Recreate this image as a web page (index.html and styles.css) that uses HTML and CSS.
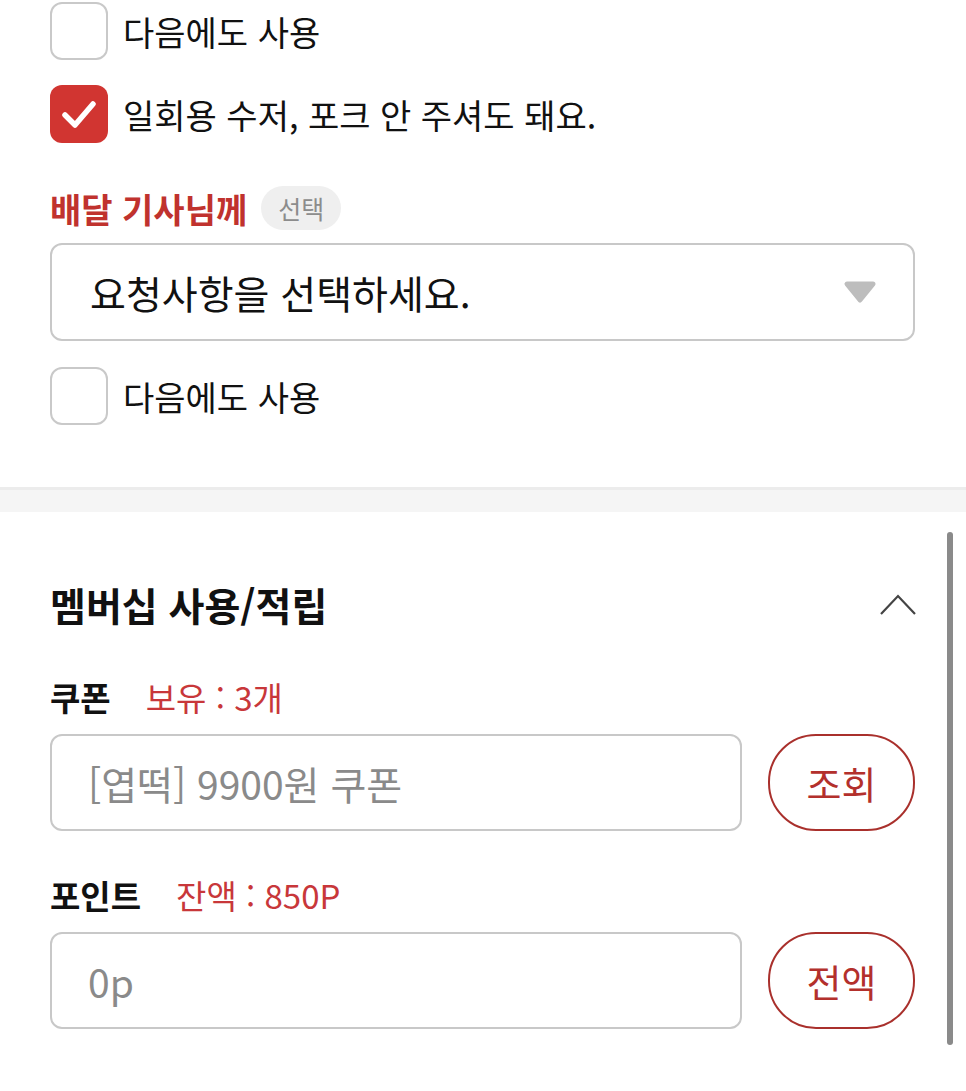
FILE: index.html
```html
<!DOCTYPE html>
<html lang="ko">
<head>
    <meta charset="UTF-8">
    <meta name="viewport" content="width=device-width, initial-scale=1.0">
    <title>주문하기</title>
    <link rel="stylesheet" href="styles.css">
</head>
<body>
    <div class="page">
        <section class="request">
            <label class="check">
                <span class="box"></span>
                <span class="check-text">다음에도 사용</span>
            </label>
            <label class="check">
                <span class="box checked">
                    <svg viewBox="0 0 58 58" width="58" height="58"><path d="M15 30 L25 40 L43 19" fill="none" stroke="#fff" stroke-width="5.5" stroke-linecap="round" stroke-linejoin="round"/></svg>
                </span>
                <span class="check-text">일회용 수저, 포크 안 주셔도 돼요.</span>
            </label>
            <div class="field-head">
                <h3 class="req-title">배달 기사님께</h3>
                <span class="badge">선택</span>
            </div>
            <div class="select">
                <span>요청사항을 선택하세요.</span>
                <svg viewBox="0 0 34 24" width="34" height="24"><path d="M4 4 L30 4 L17 20 Z" fill="#bdbdbd" stroke="#bdbdbd" stroke-width="5" stroke-linejoin="round"/></svg>
            </div>
            <label class="check">
                <span class="box"></span>
                <span class="check-text">다음에도 사용</span>
            </label>
        </section>

        <div class="divider"></div>

        <section class="membership">
            <div class="sec-head">
                <h2>멤버십 사용/적립</h2>
                <svg viewBox="0 0 38 24" width="38" height="24"><path d="M2 22 L19 4 L36 22" fill="none" stroke="#444" stroke-width="2.2"/></svg>
            </div>

            <div class="field">
                <div class="field-label"><strong>쿠폰</strong><span class="info">보유 : 3개</span></div>
                <div class="input-row">
                    <input type="text" placeholder="[엽떡] 9900원 쿠폰">
                    <button>조회</button>
                </div>
            </div>

            <div class="field">
                <div class="field-label"><strong>포인트</strong><span class="info">잔액 : 850P</span></div>
                <div class="input-row">
                    <input type="text" placeholder="0p">
                    <button>전액</button>
                </div>
            </div>
        </section>

        <div class="scrollbar"></div>
    </div>
</body>
</html>
```

FILE: styles.css
```css
body {
    margin: 0;
    font-family: "Noto Sans CJK KR", "Noto Sans", sans-serif;
    background: #fff;
    color: #111;
}
.page {
    position: relative;
    width: 966px;
    height: 1091px;
    overflow: hidden;
}
.request {
    padding: 2px 51px 0 50px;
}
.check {
    display: flex;
    align-items: center;
    gap: 15px;
    height: 58px;
    margin-bottom: 25px;
}
.box {
    box-sizing: border-box;
    width: 58px;
    height: 58px;
    border: 2px solid #c9c9c9;
    border-radius: 12px;
    background: #fff;
    flex-shrink: 0;
}
.box.checked {
    border: none;
    background: #d13531;
}
.box svg {
    display: block;
}
.check-text {
    font-size: 34px;
    color: #111;
}
.field-head {
    display: flex;
    align-items: center;
    gap: 14px;
    margin-top: 43px;
    height: 44px;
}
.req-title {
    margin: 0;
    font-size: 34px;
    font-weight: bold;
    color: #c0322e;
}
.badge {
    height: 44px;
    line-height: 44px;
    padding: 0 17px;
    border-radius: 22px;
    background: #efefef;
    color: #8c8c8c;
    font-size: 25px;
}
.select {
    box-sizing: border-box;
    display: flex;
    align-items: center;
    justify-content: space-between;
    height: 98px;
    margin: 13px 0 26px;
    padding: 0 36px 0 38px;
    border: 2px solid #c8c8c8;
    border-radius: 12px;
    font-size: 39px;
}
.select svg {
    display: block;
}
.request .check:last-child {
    margin-bottom: 0;
}
.divider {
    box-sizing: border-box;
    height: 25px;
    margin-top: 62px;
    border-top: 3px solid #ececec;
    background: #f5f5f5;
}
.membership {
    padding: 0 51px 0 50px;
}
.sec-head {
    display: flex;
    align-items: center;
    justify-content: space-between;
    margin-top: 70px;
    height: 44px;
}
.sec-head h2 {
    margin: 0;
    font-size: 39px;
    font-weight: bold;
    color: #111;
}
.sec-head svg {
    display: block;
    margin-right: -2px;
}
.field {
    margin-top: 51px;
}
.field + .field {
    margin-top: 44px;
}
.field-label {
    display: flex;
    align-items: center;
    gap: 35px;
    height: 40px;
}
.field-label strong {
    font-size: 33px;
}
.info {
    font-size: 33px;
    color: #c8373a;
}
.input-row {
    display: flex;
    gap: 26px;
    margin-top: 17px;
}
.input-row input {
    box-sizing: border-box;
    flex: 1;
    height: 97px;
    padding: 0 36px;
    border: 2px solid #c8c8c8;
    border-radius: 12px;
    font-family: inherit;
    font-size: 39px;
    color: #111;
    outline: none;
}
.input-row input::placeholder {
    color: #8a8a8a;
}
.input-row button {
    box-sizing: border-box;
    width: 147px;
    height: 97px;
    border: 2.5px solid #a9302c;
    border-radius: 48px;
    background: #fff;
    color: #b3302c;
    font-family: inherit;
    font-size: 38px;
    cursor: pointer;
}
.scrollbar {
    position: absolute;
    top: 532px;
    right: 13px;
    width: 6px;
    height: 513px;
    border-radius: 3px;
    background: #8a8a8a;
}
```
